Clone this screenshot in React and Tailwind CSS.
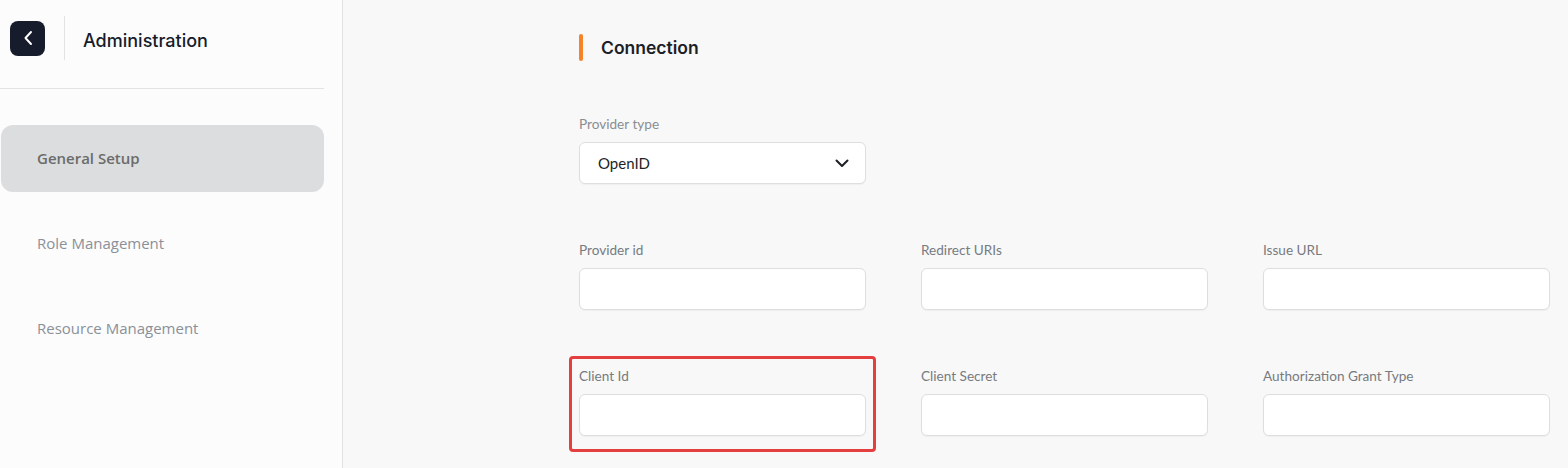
import React from "react";

const fields = [
  ["Provider id", "Redirect URIs", "Issue URL"],
  ["Client Id", "Client Secret", "Authorization Grant Type"],
];

const Field = ({ label, highlight }) => (
  <div className="relative flex flex-col">
    <label className="h-[18px] text-[13.6px] leading-[18px] text-[#777b80]">{label}</label>
    <input
      type="text"
      className="mt-[9px] h-[42px] w-full rounded-md border border-[#dedede] bg-white shadow-[0_1px_1px_rgba(0,0,0,0.04)] focus:outline-none"
    />
    {highlight && (
      <div className="pointer-events-none absolute -left-[10px] -right-[10px] -top-[11px] -bottom-[16px] rounded-[4px] border-[3px] border-[#e53e3e]" />
    )}
  </div>
);

const App = () => {
  const nav = ["General Setup", "Role Management", "Resource Management"];

  return (
    <div
      className="flex h-[468px] w-full overflow-hidden bg-[#f8f8f8]"
      style={{ fontFamily: "Lato, 'Open Sans', sans-serif" }}
    >
      <aside className="w-[343px] shrink-0 border-r border-[#e2e2e2] bg-[#fcfcfc]">
        <div className="flex items-center pt-4 pl-[10px]">
          <button className="flex h-[35px] w-[35px] items-center justify-center rounded-lg bg-[#161c2b]">
            <svg width="10" height="16" viewBox="0 0 10 16" fill="none">
              <path d="M8 2L2.5 8L8 14" stroke="white" strokeWidth="2" strokeLinecap="round" strokeLinejoin="round" />
            </svg>
          </button>
          <div className="ml-[19px] h-[44px] w-px bg-[#e2e2e2]" />
          <h1
            className="ml-[18px] mt-[4px] text-[18px] font-medium text-[#161c2b]"
            style={{ fontFamily: "Inter, 'Open Sans', sans-serif" }}
          >
            Administration
          </h1>
        </div>
        <div className="mt-[28px] h-px w-[324px] bg-[#e2e2e2]" />
        <nav
          className="mt-[36px] flex flex-col gap-[18px]"
          style={{ fontFamily: "'Open Sans', Lato, sans-serif" }}
        >
          {nav.map((item, i) => (
            <div
              key={item}
              className={
                i === 0
                  ? "ml-px flex h-[67px] w-[323px] items-center rounded-xl bg-[#dcdddf] pl-[36px] text-[15px] font-semibold text-[#6b6b6b]"
                  : "ml-px flex h-[67px] w-[323px] items-center pl-[36px] text-[15px] text-[#8a9099]"
              }
            >
              {item}
            </div>
          ))}
        </nav>
      </aside>

      <main className="flex-1 pl-[236px] pt-[34px]">
        <div className="flex h-[27px] items-center">
          <div className="h-[27px] w-[4px] rounded-sm bg-[#f5832a]" />
          <h2
            className="ml-[18px] mt-[2px] text-[17.5px] font-semibold text-[#1c1f26]"
            style={{ fontFamily: "Inter, 'Open Sans', sans-serif" }}
          >
            Connection
          </h2>
        </div>

        <div className="mt-[54px] w-[287px]">
          <label className="block h-[18px] text-[13.6px] leading-[18px] text-[#8a8d91]">Provider type</label>
          <div className="mt-[9px] flex h-[42px] items-center justify-between rounded-md border border-[#dedede] bg-white pl-[18px] pr-[16px] shadow-[0_1px_1px_rgba(0,0,0,0.04)]">
            <span className="text-[15px] text-[#1c1f26]">OpenID</span>
            <svg width="14" height="9" viewBox="0 0 14 9" fill="none">
              <path d="M1.5 1.5L7 7L12.5 1.5" stroke="#1c1f26" strokeWidth="2" strokeLinecap="round" strokeLinejoin="round" />
            </svg>
          </div>
        </div>

        <div className="mt-[57px] grid grid-cols-[287px_287px_287px] gap-x-[55px] gap-y-[57px]">
          {fields.flat().map((label) => (
            <Field key={label} label={label} highlight={label === "Client Id"} />
          ))}
        </div>
      </main>
    </div>
  );
};

export default App;
